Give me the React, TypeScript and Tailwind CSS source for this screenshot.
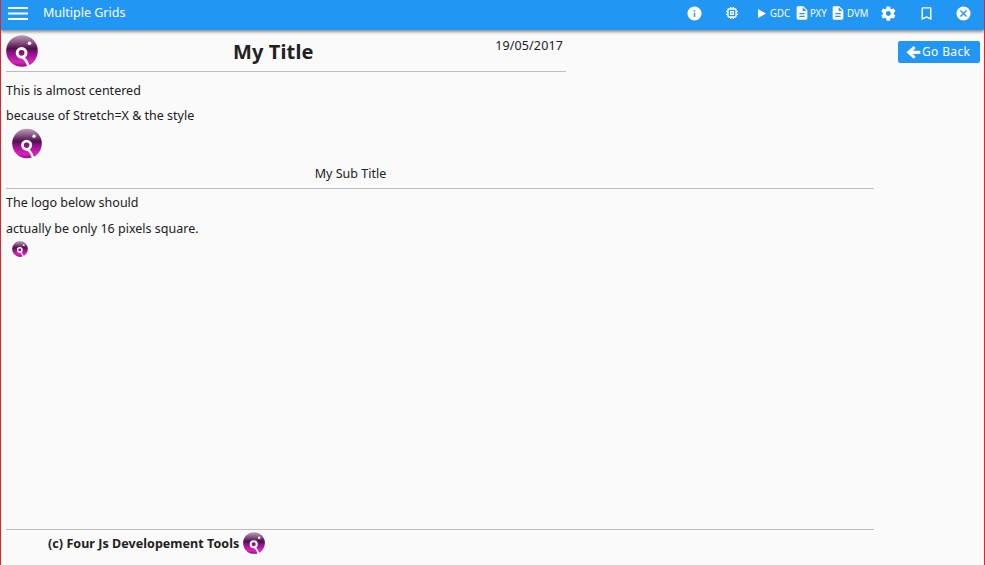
import React from 'react';
import { useId } from 'react';

const Logo: React.FC<{ className: string }> = ({ className }) => {
  const id = useId();
  return (
    <svg viewBox="0 0 32 32" className={className}>
      <defs>
        <linearGradient id={id} x1="0" y1="0" x2="0" y2="1">
          <stop offset="0" stopColor="#b9a0b6" />
          <stop offset="0.2" stopColor="#8f5c8b" />
          <stop offset="0.42" stopColor="#4f1049" />
          <stop offset="0.55" stopColor="#8c0f86" />
          <stop offset="0.85" stopColor="#dd22bc" />
          <stop offset="1" stopColor="#8a1080" />
        </linearGradient>
      </defs>
      <circle cx="16" cy="16" r="15.8" fill={`url(#${id})`} />
      <circle cx="15.6" cy="17.8" r="4.4" fill="none" stroke="#fff" strokeWidth="3" />
      <path d="M16.5 22.5 C19 23.5 21 27 22.5 31" fill="none" stroke="#fff" strokeWidth="2.6" />
      <circle cx="23.5" cy="8.3" r="1.8" fill="#fff" />
    </svg>
  );
};

const DocIcon = () => (
  <svg viewBox="0 0 24 24" className="w-[16px] h-[16px] fill-white">
    <path d="M14 2H6a2 2 0 0 0-2 2v16a2 2 0 0 0 2 2h12a2 2 0 0 0 2-2V8l-6-6zm2 16H8v-2h8v2zm0-4H8v-2h8v2zm-3-5V3.5L18.5 9H13z" />
  </svg>
);

const Toolbar = () => (
  <div className="h-[30px] shrink-0 bg-[#2196f3] flex items-center pb-[4px] pl-[7px] pr-[12px] text-white shadow-[0_2px_3px_rgba(0,0,0,0.45)] relative">
    <svg viewBox="0 0 20 13" className="w-[20px] h-[13px] fill-white">
      <rect x="0" y="0" width="20" height="2" />
      <rect x="0" y="5.5" width="20" height="2" />
      <rect x="0" y="11" width="20" height="2" />
    </svg>
    <span className="ml-[15px] text-[12.5px]">Multiple Grids</span>
    <div className="ml-auto flex items-center">
      <svg viewBox="0 0 24 24" className="w-[17px] h-[17px] fill-white">
        <path d="M12 2a10 10 0 1 0 0 20 10 10 0 0 0 0-20zm1 15h-2v-6h2v6zm0-8h-2V7h2v2z" />
      </svg>
      <svg viewBox="0 0 24 24" className="ml-[21px] w-[16px] h-[16px] fill-white">
        <path d="M15 9H9v6h6V9zm-2 4h-2v-2h2v2zm8-2V9h-2V7a2 2 0 0 0-2-2h-2V3h-2v2h-2V3H9v2H7a2 2 0 0 0-2 2v2H3v2h2v2H3v2h2v2a2 2 0 0 0 2 2h2v2h2v-2h2v2h2v-2h2a2 2 0 0 0 2-2v-2h2v-2h-2v-2h2zm-4 6H7V7h10v10z" />
      </svg>
      <svg viewBox="0 0 8 9" className="ml-[18px] w-[8px] h-[9px] fill-white">
        <path d="M0 0l8 4.5L0 9z" />
      </svg>
      <span className="ml-[4px] w-[19px] text-[11px] scale-x-[0.87] origin-left">GDC</span>
      <span className="ml-[5px] flex"><DocIcon /></span>
      <span className="w-[17px] text-[11px] scale-x-[0.87] origin-left">PXY</span>
      <span className="ml-[3px] flex"><DocIcon /></span>
      <span className="ml-[1px] w-[21px] text-[11px] scale-x-[0.87] origin-left">DVM</span>
      <svg viewBox="0 0 24 24" className="ml-[12px] w-[17px] h-[17px] fill-white">
        <path d="M19.4 13c.04-.32.06-.66.06-1s-.02-.68-.07-1l2.16-1.68a.5.5 0 0 0 .12-.64l-2.05-3.55a.5.5 0 0 0-.62-.22l-2.55 1.02a7.5 7.5 0 0 0-1.73-1l-.38-2.71A.5.5 0 0 0 13.84 2H9.76a.5.5 0 0 0-.5.42l-.38 2.71c-.62.26-1.2.6-1.73 1L4.6 5.1a.5.5 0 0 0-.62.22L1.93 8.87a.5.5 0 0 0 .12.64L4.21 11c-.05.32-.08.67-.08 1s.03.68.07 1l-2.16 1.68a.5.5 0 0 0-.12.64l2.05 3.55c.13.22.39.3.62.22l2.55-1.02c.53.4 1.1.74 1.73 1l.38 2.71c.05.24.26.42.5.42h4.08c.25 0 .46-.18.5-.42l.38-2.71c.62-.26 1.2-.6 1.73-1l2.55 1.02c.23.08.49 0 .62-.22l2.05-3.55a.5.5 0 0 0-.12-.64L19.4 13zM11.8 15.5a3.5 3.5 0 1 1 0-7 3.5 3.5 0 0 1 0 7z" />
      </svg>
      <svg viewBox="0 0 24 24" className="ml-[21px] w-[17px] h-[17px] fill-white">
        <path d="M17 3H7a2 2 0 0 0-2 2v16l7-3 7 3V5a2 2 0 0 0-2-2zm0 15-5-2.2L7 18V5h10v13z" />
      </svg>
      <svg viewBox="0 0 24 24" className="ml-[20px] w-[17px] h-[17px] fill-white">
        <path d="M12 2a10 10 0 1 0 0 20 10 10 0 0 0 0-20zm5 13.6L15.6 17 12 13.4 8.4 17 7 15.6l3.6-3.6L7 8.4 8.4 7l3.6 3.6L15.6 7 17 8.4 13.4 12l3.6 3.6z" />
      </svg>
    </div>
  </div>
);

export default function App() {
  return (
    <div className="h-[565px] w-[985px] overflow-hidden flex flex-col bg-[#fafafa] border-x border-[#e0242c] font-['Noto_Sans',sans-serif] text-[12.5px] text-[#212121]">
      <Toolbar />
      <div className="flex-1 flex pl-[5px] min-h-0">
        <div className="w-[868px] flex flex-col">
          <div className="w-[560px] h-[42px] pt-[5px] flex items-start border-b border-[#bdbdbd]">
            <Logo className="w-[32px] h-[32px]" />
            <h1 className="ml-[195px] mt-[3px] text-[20px] leading-[27px] font-bold w-[90px] tracking-[0.12px]">My Title</h1>
            <span className="ml-auto mr-[3px] mt-[2px] leading-[17px] tracking-[0.13px]">19/05/2017</span>
          </div>
          <p className="mt-[10px] leading-[17px]">This is almost centered</p>
          <p className="mt-[8px] leading-[17px]">because of Stretch=X &amp; the style</p>
          <Logo className="ml-[6px] mt-[4px] w-[30px] h-[31px]" />
          <p className="mt-[6px] leading-[17px] text-center pr-[179px]">My Sub Title</p>
          <div className="mt-[6px] border-b border-[#bdbdbd]" />
          <p className="mt-[5px] leading-[17px]">The logo below should</p>
          <p className="mt-[9px] leading-[17px]">actually be only 16 pixels square.</p>
          <Logo className="ml-[6px] mt-[4px] w-[16px] h-[16px]" />
          <div className="mt-auto border-t border-[#bdbdbd] h-[36px] pl-[42px] pt-[2px] flex items-start">
            <span className="mt-[3px] leading-[17px] font-bold tracking-[0.05px]">(c) Four Js Developement Tools</span>
            <Logo className="ml-[4px] w-[22px] h-[22px]" />
          </div>
        </div>
        <div className="ml-[24px] pt-[11px]">
          <button className="w-[82px] h-[22px] bg-[#2196f3] rounded-[2px] text-white flex items-center pl-[7px]">
            <svg viewBox="0 0 24 24" className="w-[16px] h-[16px] fill-white">
              <path d="M13 3l3 3-4 4h11v5H12l4 4-3 3L2 12.5z" />
            </svg>
            <span className="ml-[1px] text-[12px] tracking-[0.35px]">Go Back</span>
          </button>
        </div>
      </div>
    </div>
  );
}
